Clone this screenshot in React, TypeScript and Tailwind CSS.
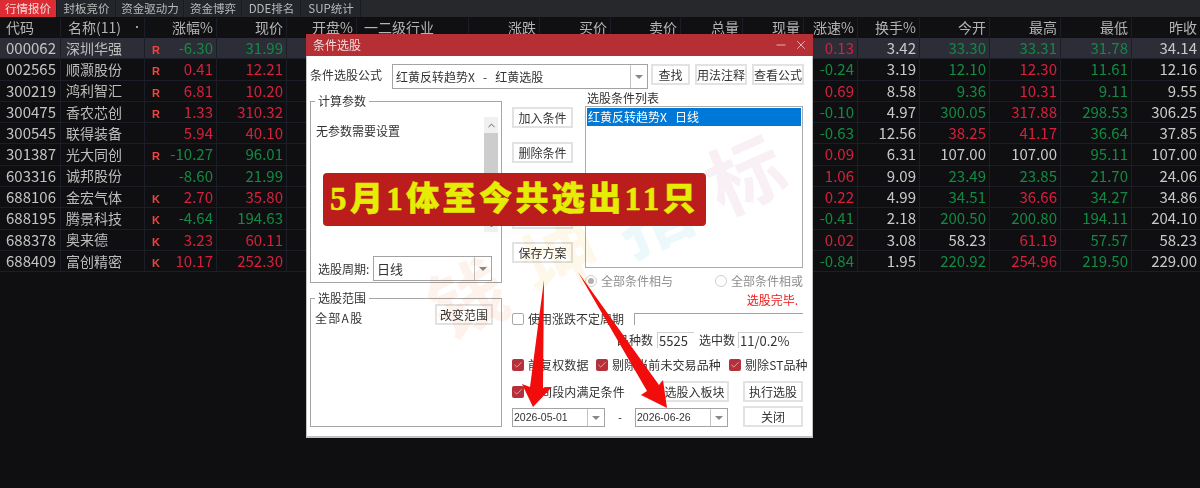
import { Minus, X, Check, ChevronUp, ChevronDown } from 'lucide-react';
import type { ReactNode } from 'react';

type Stock = {
  code: string;
  name: string;
  flag?: string;
  pct: number;
  price: number;
  speed: number;
  turnover: string;
  open: number;
  high: number;
  low: number;
  prev: number;
};

const stocks: Stock[] = [
  { code: '000062', name: '深圳华强', flag: 'R', pct: -6.3, price: 31.99, speed: 0.13, turnover: '3.42', open: 33.3, high: 33.31, low: 31.78, prev: 34.14 },
  { code: '002565', name: '顺灏股份', flag: 'R', pct: 0.41, price: 12.21, speed: -0.24, turnover: '3.19', open: 12.1, high: 12.3, low: 11.61, prev: 12.16 },
  { code: '300219', name: '鸿利智汇', flag: 'R', pct: 6.81, price: 10.2, speed: 0.69, turnover: '8.58', open: 9.36, high: 10.31, low: 9.11, prev: 9.55 },
  { code: '300475', name: '香农芯创', flag: 'R', pct: 1.33, price: 310.32, speed: -0.1, turnover: '4.97', open: 300.05, high: 317.88, low: 298.53, prev: 306.25 },
  { code: '300545', name: '联得装备', pct: 5.94, price: 40.1, speed: -0.63, turnover: '12.56', open: 38.25, high: 41.17, low: 36.64, prev: 37.85 },
  { code: '301387', name: '光大同创', flag: 'R', pct: -10.27, price: 96.01, speed: 0.09, turnover: '6.31', open: 107, high: 107, low: 95.11, prev: 107 },
  { code: '603316', name: '诚邦股份', pct: -8.6, price: 21.99, speed: 1.06, turnover: '9.09', open: 23.49, high: 23.85, low: 21.7, prev: 24.06 },
  { code: '688106', name: '金宏气体', flag: 'K', pct: 2.7, price: 35.8, speed: 0.22, turnover: '4.99', open: 34.51, high: 36.66, low: 34.27, prev: 34.86 },
  { code: '688195', name: '腾景科技', flag: 'K', pct: -4.64, price: 194.63, speed: -0.41, turnover: '2.18', open: 200.5, high: 200.8, low: 194.11, prev: 204.1 },
  { code: '688378', name: '奥来德', flag: 'K', pct: 3.23, price: 60.11, speed: 0.02, turnover: '3.08', open: 58.23, high: 61.19, low: 57.57, prev: 58.23 },
  { code: '688409', name: '富创精密', flag: 'K', pct: 10.17, price: 252.3, speed: -0.84, turnover: '1.95', open: 220.92, high: 254.96, low: 219.5, prev: 229 },
];

const tabs = [
  { label: '行情报价', w: 'w-[57px]', on: true },
  { label: '封板竞价', w: 'w-[58px]' },
  { label: '资金驱动力', w: 'w-[67px]' },
  { label: '资金博弈', w: 'w-[57px]' },
  { label: 'DDE排名', w: 'w-[58px]' },
  { label: 'SUP统计', w: 'w-[59px]' },
];

const tone = (v: number, base = 0) => (v > base ? 'text-[#d4213d]' : v < base ? 'text-[#128a43]' : 'text-[#c9c9c9]');

function Cell({ w, className = '', children }: { w: string; className?: string; children?: ReactNode }) {
  return (
    <div className={`${w} shrink-0 h-full border-r border-[#1c1e27] flex items-center justify-end pr-[3px] ${className}`}>
      {children}
    </div>
  );
}

function HeaderRow() {
  return (
    <div className="flex h-[20px] text-[14px] leading-[16px] text-[#b4b4b4] bg-[#101013]">
      <Cell w="w-[61px]" className="!justify-start pl-[6px] pb-[3px]">代码</Cell>
      <Cell w="w-[84px]" className="!justify-between pl-[7px] pr-[4px] pb-[3px]">
        <span>名称(11)</span>
        <span className="text-[10px] mr-[-2px]">•</span>
      </Cell>
      <Cell w="w-[72px]" className="pb-[3px]">涨幅%</Cell>
      <Cell w="w-[70px]" className="pb-[3px]">现价</Cell>
      <Cell w="w-[70px]" className="pb-[3px]">开盘%</Cell>
      <Cell w="w-[112px]" className="!justify-start pl-[7px] pb-[3px]">一二级行业</Cell>
      <Cell w="w-[71px]" className="pb-[3px]">涨跌</Cell>
      <Cell w="w-[71px]" className="pb-[3px]">买价</Cell>
      <Cell w="w-[70px]" className="pb-[3px]">卖价</Cell>
      <Cell w="w-[62px]" className="pb-[3px]">总量</Cell>
      <Cell w="w-[61px]" className="pb-[3px]">现量</Cell>
      <Cell w="w-[54px]" className="pb-[3px]">涨速%</Cell>
      <Cell w="w-[62px]" className="pb-[3px]">换手%</Cell>
      <Cell w="w-[70px]" className="pb-[3px]">今开</Cell>
      <Cell w="w-[71px]" className="pb-[3px]">最高</Cell>
      <Cell w="w-[71px]" className="pb-[3px]">最低</Cell>
      <Cell w="w-[68px]" className="!border-r-0 pr-[1px] pb-[3px]">昨收</Cell>
    </div>
  );
}

function StockRow({ s, active }: { s: Stock; active: boolean }) {
  return (
    <div className={`flex h-[21.3px] text-[15px] border-b border-[#1c1e27] ${active ? 'bg-[#2d2d38]' : ''}`}>
      <Cell w="w-[61px]" className="!justify-start pl-[6px] text-[#c4c4c4]">{s.code}</Cell>
      <Cell w="w-[84px]" className="!justify-start pl-[5px] text-[14px] text-[#bdbdbd]">{s.name}</Cell>
      <Cell w="w-[72px]" className={`!justify-between pl-[7px] ${tone(s.pct)}`}>
        <span className="font-['Liberation_Sans',sans-serif] font-bold text-[11px] text-[#f2453d] pt-[4px] w-[10px]">{s.flag}</span>
        <span>{s.pct.toFixed(2)}</span>
      </Cell>
      <Cell w="w-[70px]" className={tone(s.price, s.prev)}>{s.price.toFixed(2)}</Cell>
      <Cell w="w-[70px]" />
      <Cell w="w-[112px]" />
      <Cell w="w-[71px]" />
      <Cell w="w-[71px]" />
      <Cell w="w-[70px]" />
      <Cell w="w-[62px]" />
      <Cell w="w-[61px]" />
      <Cell w="w-[54px]" className={tone(s.speed)}>{s.speed.toFixed(2)}</Cell>
      <Cell w="w-[62px]" className="text-[#c9c9c9]">{s.turnover}</Cell>
      <Cell w="w-[70px]" className={tone(s.open, s.prev)}>{s.open.toFixed(2)}</Cell>
      <Cell w="w-[71px]" className={tone(s.high, s.prev)}>{s.high.toFixed(2)}</Cell>
      <Cell w="w-[71px]" className={tone(s.low, s.prev)}>{s.low.toFixed(2)}</Cell>
      <Cell w="w-[68px]" className="!border-r-0 pr-[1px] text-[#c9c9c9]">{s.prev.toFixed(2)}</Cell>
    </div>
  );
}

function Btn({ w, className = '', children }: { w: string; className?: string; children: ReactNode }) {
  return (
    <div className={`${w} h-[21px] shrink-0 border-2 border-[#e2e2e2] bg-white flex items-center justify-center text-[12px] text-[#333] ${className}`}>
      {children}
    </div>
  );
}

function Combo({ w, h, arrow, pad = 'pl-[3px]', className = '', children }: { w: string; h: string; arrow: string; pad?: string; className?: string; children: ReactNode }) {
  return (
    <div className={`${w} ${h} shrink-0 border border-[#a3a3a3] bg-white flex items-center ${className}`}>
      <div className={`flex-1 ${pad} whitespace-pre text-[#333]`}>{children}</div>
      <div className={`${arrow} h-full border-l border-[#c4c4c4] flex items-center justify-center`}>
        <div className="w-0 h-0 border-x-[4px] border-x-transparent border-t-[4px] border-t-[#888]" />
      </div>
    </div>
  );
}

function Tick({ label, w }: { label: string; w?: string }) {
  return (
    <div className={`${w ?? ''} flex items-center gap-[4px] shrink-0`}>
      <div className="w-[12px] h-[12px] rounded-[2px] bg-[#b5303a] flex items-center justify-center">
        <Check size={10} color="#f4d9d9" strokeWidth={1.6} />
      </div>
      <span className="text-[12px] text-[#333] tracking-[0.1px]">{label}</span>
    </div>
  );
}

function Radio({ dot, label }: { dot?: boolean; label: string }) {
  return (
    <div className="flex items-center gap-[4px]">
      <div className="w-[12px] h-[12px] rounded-full border border-[#cfcfcf] flex items-center justify-center">
        {dot && <div className="w-[6px] h-[6px] rounded-full bg-[#b0b0b0]" />}
      </div>
      <span className="text-[12px] text-[#8e8e8e]">{label}</span>
    </div>
  );
}

function Group({ title, h, children }: { title: string; h: string; children: ReactNode }) {
  return (
    <fieldset className={`${h} border border-[#a6a6a6] min-w-0`}>
      <legend className="ml-[4px] px-[3px] text-[12px] leading-[14px] text-[#333]">{title}</legend>
      {children}
    </fieldset>
  );
}

function Dialog() {
  return (
    <div className="absolute left-[306px] top-[34px] w-[507px] h-[404px] flex flex-col bg-white text-[12px] text-[#333]">
      <div className="h-[22px] shrink-0 bg-[#b52f35] flex items-center justify-between pl-[7px] pr-[5px] text-[#f3dcdc]">
        <span>条件选股</span>
        <div className="flex items-center gap-[6px]">
          <Minus size={14} strokeWidth={1.3} />
          <X size={14} strokeWidth={1.3} />
        </div>
      </div>

      <div className="flex-1 border-x border-b-2 border-[#c3c3c3] pl-[3px]">
        <div className="flex mt-[8px] h-[25px]">
          <div className="w-[82px] shrink-0 leading-[21px]">条件选股公式</div>
          <Combo w="w-[256px]" h="h-[25px]" arrow="w-[17px]">{'红黄反转趋势X   -   红黄选股'}</Combo>
          <Btn w="w-[39px]" className="ml-[3px]">查找</Btn>
          <Btn w="w-[52px]" className="ml-[5px]">用法注释</Btn>
          <Btn w="w-[52px]" className="ml-[5px]">查看公式</Btn>
        </div>

        <div className="flex">
          <div className="w-[192px] shrink-0 mt-[5px] flex flex-col gap-[8px]">
            <Group title="计算参数" h="h-[189px]">
              <div className="flex justify-between pl-[5px] pr-[3px] pt-[9px]">
                <span className="mt-[5px]">无参数需要设置</span>
                <div className="w-[14px] h-[115px] bg-[#f0f0f0] flex flex-col items-center">
                  <ChevronUp size={11} className="mt-[3px] mb-[2px] shrink-0" strokeWidth={2} color="#555" />
                  <div className="w-full h-[77px] bg-[#cdcdcd]" />
                  <ChevronDown size={11} className="mt-auto mb-[1px] shrink-0" strokeWidth={2} color="#555" />
                </div>
              </div>
              <div className="flex items-center pl-[7px] mt-[24px] gap-[2px]">
                <span className="w-[53px] shrink-0">选股周期:</span>
                <Combo w="w-[119px]" h="h-[25px]" arrow="w-[17px]" className="text-[13px]">日线</Combo>
              </div>
            </Group>
            <Group title="选股范围" h="h-[136px]">
              <div className="flex justify-between pl-[4px] pr-[8px]">
                <span className="mt-[4px] tracking-[1.3px]">全部A股</span>
                <Btn w="w-[58px]" className="mt-[-1px]">改变范围</Btn>
              </div>
            </Group>
          </div>

          <div className="w-[295px] shrink-0 ml-[10px] mt-[2px]">
            <div className="flex h-[177px]">
              <div className="w-[61px] shrink-0 pt-[16px] flex flex-col">
                <Btn w="w-[61px]">加入条件</Btn>
                <Btn w="w-[61px]" className="mt-[14px]">删除条件</Btn>
                <Btn w="w-[61px]" className="mt-[45px]">引入方案</Btn>
                <Btn w="w-[61px]" className="mt-[13px]">保存方案</Btn>
              </div>
              <div className="w-[218px] ml-[12px] flex flex-col">
                <div className="h-[15px] pl-[2px] leading-[14px]">选股条件列表</div>
                <div className="flex-1 border border-[#ababab] p-[1px]">
                  <div className="h-[18px] bg-[#0078d7] text-white pl-[1px] leading-[18px] whitespace-pre">{'红黄反转趋势X   日线'}</div>
                </div>
              </div>
            </div>

            <div className="mt-[5px] h-[16px] pl-[73px] pr-[4px] flex justify-between">
              <Radio dot label="全部条件相与" />
              <Radio label="全部条件相或" />
            </div>
            <div className="mt-[4px] h-[14px] pr-[9px] text-right leading-[14px] text-[#f01818]">选股完毕.</div>

            <div className="mt-[4px] h-[16px] flex items-center">
              <div className="w-[12px] h-[12px] rounded-[2px] border border-[#a8a8a8] bg-white" />
              <span className="ml-[4px] w-[96px]">使用涨跌不定周期</span>
              <div className="ml-[10px] w-[169px] h-[12px] border-t border-l border-[#a3a3a3]" />
            </div>

            <div className="mt-[4px] h-[18px] flex items-center pl-[105px]">
              <span className="w-[36px]">品种数</span>
              <div className="ml-[4px] w-[37px] h-[16px] border-t border-l border-[#d0d0d0] pl-[1px] text-[13px] leading-[16px]">5525</div>
              <span className="ml-[5px] w-[36px]">选中数</span>
              <div className="ml-[3px] w-[65px] h-[16px] border-t border-l border-[#d0d0d0] pl-[1px] text-[13px] leading-[16px]">11/0.2%</div>
            </div>

            <div className="mt-[8px] h-[16px] flex items-center">
              <Tick w="w-[84px]" label="前复权数据" />
              <Tick w="w-[133px]" label="剔除当前未交易品种" />
              <Tick label="剔除ST品种" />
            </div>

            <div className="mt-[8px] h-[21px] flex items-center">
              <Tick w="w-[148px]" label="时间段内满足条件" />
              <Btn w="w-[69px]">选股入板块</Btn>
              <Btn w="w-[60px]" className="ml-[14px]">执行选股</Btn>
            </div>

            <div className="mt-[4px] h-[21px] flex items-end font-['Liberation_Sans',sans-serif] text-[10.5px]">
              <Combo w="w-[93px]" h="h-[19px]" arrow="w-[17px]" pad="pl-[1px]">2026-05-01</Combo>
              <span className="w-[30px] text-center pb-[1px]">-</span>
              <Combo w="w-[93px]" h="h-[19px]" arrow="w-[17px]" pad="pl-[1px]">2026-06-26</Combo>
              <Btn w="w-[60px]" className="ml-[15px] font-['Noto_Sans_CJK_SC',sans-serif]">关闭</Btn>
            </div>
          </div>
        </div>
      </div>
    </div>
  );
}

export default function App() {
  return (
    <div className="relative w-[1200px] h-[488px] overflow-hidden bg-[#0f0f12] font-['Noto_Sans_CJK_SC',sans-serif]">
      <div className="flex h-[17px] bg-[#26282b] text-[11.5px] leading-[15px] gap-[1px]">
        {tabs.map((t) => (
          <div
            key={t.label}
            className={`${t.w} h-full flex items-center justify-center pb-[1px] border-r border-[#1a1b1e] ${t.on ? 'bg-[#dc2d35] text-[#f6dcdc]' : 'bg-[#23262a] text-[#b9b9b9]'}`}
          >
            {t.label}
          </div>
        ))}
      </div>

      <div className="pt-[1px]">
        <HeaderRow />
        {stocks.map((s, i) => (
          <StockRow key={s.code} s={s} active={i === 0} />
        ))}
      </div>

      <Dialog />

      {/* 水印 */}
      <div className="absolute left-[415px] top-[195px] w-[380px] flex justify-between -rotate-[24deg] text-[76px] leading-[76px] font-bold mix-blend-multiply pointer-events-none">
        <span className="text-[#fef2ec]">钱</span>
        <span className="text-[#fef8ea]">坤</span>
        <span className="text-[#edf8fd]">指</span>
        <span className="text-[#f9f0f6]">标</span>
      </div>

      {/* 横幅 */}
      <div className="absolute left-[323px] top-[173px] w-[383px] h-[53px] rounded-[4px] bg-[#bb1c1c] flex items-center justify-center text-[33px] font-black tracking-[3.4px] text-[#e5ec05] [-webkit-text-stroke:0.5px_#e5ec05] font-['Liberation_Serif','Noto_Sans_CJK_SC',serif]">
        5月1体至今共选出11只
      </div>

      {/* 红色箭头 */}
      <svg className="absolute left-0 top-0 pointer-events-none" width="1200" height="488" viewBox="0 0 1200 488">
        <polygon points="544,280 543,388 552,387 533,407 522,384 530,387" fill="#f20d0d" />
        <polygon points="578,272 659,385 663,380 667,408 641,395 647,391" fill="#f20d0d" />
      </svg>
    </div>
  );
}
